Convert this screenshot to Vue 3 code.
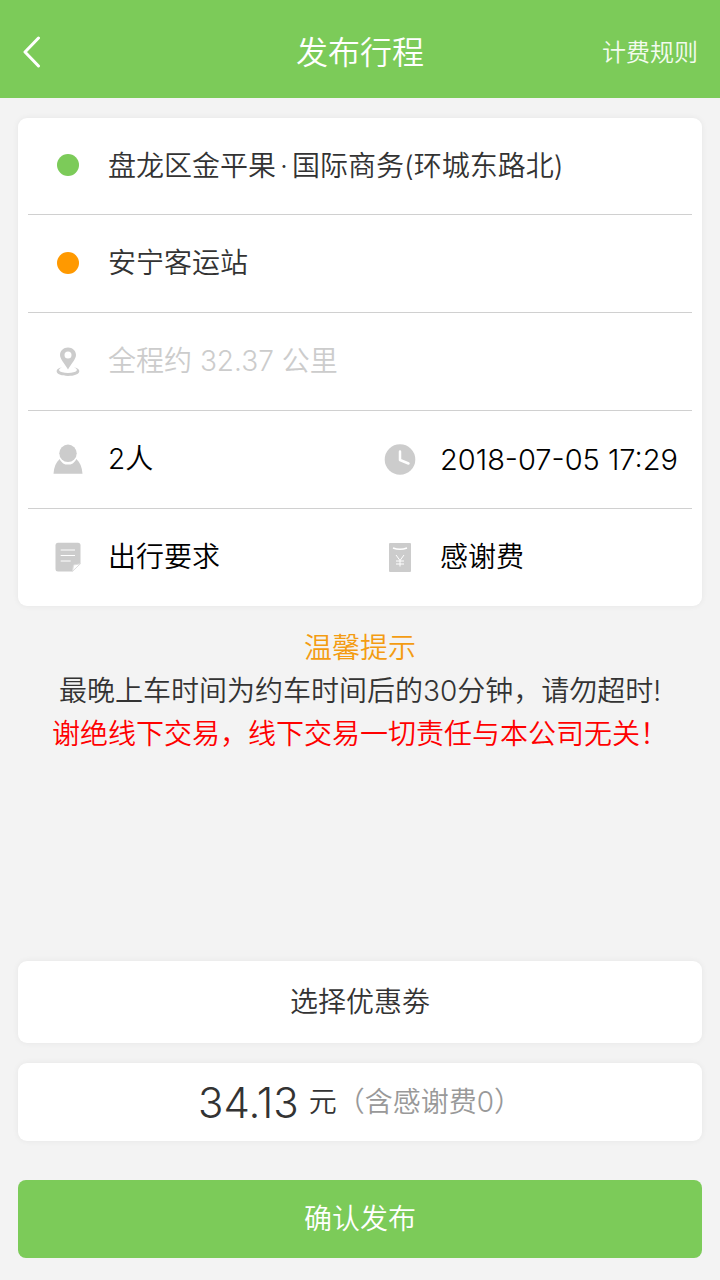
<script setup>
const tips = [
  { text: '温馨提示', tone: 'orange' },
  { text: '最晚上车时间为约车时间后的30分钟，请勿超时!', tone: 'dark' },
  { text: '谢绝线下交易，线下交易一切责任与本公司无关！', tone: 'red' },
]
</script>

<template>
  <div class="page">
    <header class="bar">
      <button class="back" type="button" aria-label="返回">
        <svg width="20" height="32" viewBox="0 0 20 32" fill="none" stroke="#fff" stroke-width="3" stroke-linecap="round" stroke-linejoin="round">
          <path d="M16.500 2 L3 16 L16.500 30" />
        </svg>
      </button>
      <h1>发布行程</h1>
      <a class="rules" href="#">计费规则</a>
    </header>

    <main>
      <section class="card trip">
        <div class="row">
          <button class="cell" type="button">
            <span class="icon"><i class="dot start"></i></span>
            <span>盘龙区金平果<span class="mid">·</span>国际商务(环城东路北)</span>
          </button>
        </div>
        <div class="row">
          <button class="cell" type="button">
            <span class="icon"><i class="dot end"></i></span>
            <span>安宁客运站</span>
          </button>
        </div>
        <div class="row">
          <p class="cell distance">
            <span class="icon">
              <svg width="32" height="32" viewBox="0 0 32 32" fill="#ccc">
                <path fill-rule="evenodd" d="M16 2.500 C11.500 2.500 8 5.800 8 10 C8 14 12.500 18.500 16 24.500 C19.500 18.500 24 14 24 10 C24 5.800 20.500 2.500 16 2.500 Z M16 6.500 a3.500 3.500 0 1 1 0 7 a3.500 3.500 0 1 1 0 -7 Z" />
                <path d="M10 22.300 C1.500 24 3 31 16 31 C29 31 30.500 24 22 22.300 C27.500 24.500 25 28 16 28 C7 28 4.500 24.500 10 22.300 Z" />
              </svg>
            </span>
            <span>全程约 32.37 公里</span>
          </p>
        </div>
        <div class="row">
          <button class="cell" type="button">
            <span class="icon">
              <svg width="32" height="32" viewBox="0 0 32 32" fill="#ccc">
                <circle cx="16" cy="10.300" r="8.700" />
                <path d="M7.700 15.900 C9.500 20 12.500 21.600 16 21.600 C19.500 21.600 22.500 20 24.300 15.900 C28 19 30 24 30.500 30.700 H1.500 C2 24 4 19 7.700 15.900 Z" />
              </svg>
            </span>
            <span>2人</span>
          </button>
          <button class="cell" type="button">
            <span class="icon">
              <svg width="32" height="32" viewBox="0 0 32 32">
                <circle cx="16" cy="16.500" r="15.300" fill="#ccc" />
                <path d="M16 8.500 V17 L24.500 20.500" fill="none" stroke="#fff" stroke-width="2.500" stroke-linecap="round" stroke-linejoin="round" />
              </svg>
            </span>
            <span class="time">2018-07-05 17:29</span>
          </button>
        </div>
        <div class="row">
          <button class="cell" type="button">
            <span class="icon">
              <svg width="32" height="32" viewBox="0 0 32 32">
                <path fill="#ccc" d="M6 1.800 H26 Q28.500 1.800 28.500 4.300 V22.500 L20.500 30.500 H6 Q3.500 30.500 3.500 28 V4.300 Q3.500 1.800 6 1.800 Z" />
                <path fill="#fff" stroke="#ddd" stroke-width="1" stroke-linejoin="round" d="M20.500 30.300 L21.500 24 L28.300 22.800 Z" />
                <path stroke="#fff" stroke-width="1" d="M8.700 9 H23 M8.700 14.500 H23 M8.700 20 H18.700" />
              </svg>
            </span>
            <span>出行要求</span>
          </button>
          <button class="cell" type="button">
            <span class="icon">
              <svg width="32" height="32" viewBox="0 0 32 32" fill="none" stroke="#fff">
                <rect x="5" y="2" width="22" height="29" rx="1" fill="#ccc" stroke="none" />
                <path stroke-width="1.500" d="M9 7 Q16 9.500 23 7" />
                <path stroke-width="1" d="M12 14 L16 19.500 L20 14 M16 19.500 V25.500 M12 20 H20 M12 23 H20" />
              </svg>
            </span>
            <span>感谢费</span>
          </button>
        </div>
      </section>

      <section class="tips">
        <p v-for="tip in tips" :key="tip.text" :class="tip.tone">{{ tip.text }}</p>
      </section>

      <button class="card coupon" type="button">选择优惠劵</button>
      <p class="card price">
        <strong>34.13</strong>
        <span class="unit">元</span>
        <span class="extra">（含感谢费0）</span>
      </p>
      <button class="confirm" type="button">确认发布</button>
    </main>
  </div>
</template>

<style>
body {
  background: #f3f3f3;
}
</style>

<style scoped>
.page {
  box-sizing: border-box;
  display: flex;
  flex-direction: column;
  min-height: 100vh;
  background: #f3f3f3;
  color: #333;
  font-family: Inter, "Noto Sans CJK SC", sans-serif;
  font-size: 28px;
  font-weight: 350;
  line-height: 43px;
}

h1,
p {
  margin: 0;
  font-weight: inherit;
}

button {
  margin: 0;
  padding: 0;
  border: 0;
  background: none;
  color: inherit;
  font: inherit;
  cursor: pointer;
}

svg {
  display: block;
}

.bar {
  display: grid;
  grid-template-columns: 1fr auto 1fr;
  align-items: center;
  height: 98px;
  padding: 6px 22px 0;
  box-sizing: border-box;
  background: #7ccb59;
  color: #fff;
}

.back {
  justify-self: start;
}

h1 {
  font-size: 32px;
}

.rules {
  justify-self: end;
  color: #f3fbef;
  font-size: 24px;
  text-decoration: none;
}

main {
  flex: 1;
  display: flex;
  flex-direction: column;
  padding: 20px 18px 22px;
}

.card {
  border-radius: 9px;
  background: #fff;
  box-shadow: 0 0 6px rgba(0, 0, 0, 0.06);
}

.trip {
  padding: 0 10px;
}

.row {
  display: grid;
  grid-auto-flow: column;
  grid-auto-columns: 1fr;
  height: 97px;
  border-top: 1px solid #d0d0d0;
}

.row:first-child {
  height: 96px;
  border-top: 0;
}

.cell {
  display: flex;
  align-items: center;
  text-align: left;
  white-space: nowrap;
}

.row:nth-child(n + 4) .cell {
  color: #000;
}

.row .distance {
  color: #ccc;
}

.icon {
  flex: none;
  display: flex;
  justify-content: center;
  width: 80px;
  padding-bottom: 2px;
}

.time {
  font-size: 29px;
  font-weight: 300;
}

.dot {
  width: 22px;
  height: 22px;
  border-radius: 50%;
}

.start {
  background: #7ccb59;
}

.end {
  background: #ff9900;
}

.mid {
  margin: 0 4px;
}

.tips {
  margin: 21px 0 auto;
  text-align: center;
}

.orange {
  color: #f39c12;
}

.red {
  color: #f00;
}

.coupon {
  height: 82px;
  margin-bottom: 20px;
}

.price {
  display: flex;
  align-items: center;
  justify-content: center;
  height: 78px;
  margin-bottom: 39px;
}

.price strong {
  margin-right: 10px;
  font-size: 42px;
  font-weight: 300;
}

.extra {
  color: #999;
}

.confirm {
  height: 78px;
  border-radius: 8px;
  background: #7ccb59;
  color: #fff;
}
</style>
